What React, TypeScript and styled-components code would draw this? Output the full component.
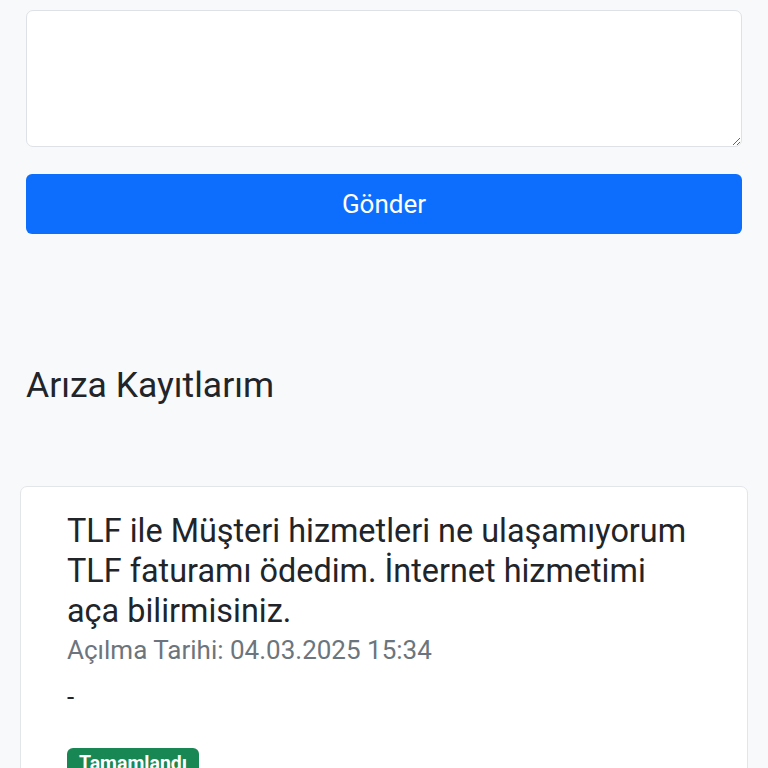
import styled, { createGlobalStyle } from "styled-components";

const GlobalStyle = createGlobalStyle`
  html, body {
    margin: 0;
    padding: 0;
    background: #f8f9fa;
    font-family: Roboto, "Noto Sans", Arial, sans-serif;
    color: #212529;
  }
  * {
    box-sizing: border-box;
  }
`;

const Page = styled.div`
  width: 768px;
  height: 768px;
  overflow: hidden;
`;

const FormSection = styled.div`
  padding: 0 26px;
  margin-top: -30px;
`;

const Label = styled.label`
  display: block;
  font-size: 24px;
  line-height: 32px;
  margin-bottom: 8px;
`;

const TextArea = styled.textarea`
  display: block;
  width: 100%;
  height: 137px;
  border: 1.5px solid #dee2e6;
  border-radius: 7px;
  background: #fff;
  font-family: inherit;
  font-size: 24px;
  padding: 10px 16px;
  resize: vertical;
  outline: none;
`;

const SubmitButton = styled.button`
  display: block;
  width: 100%;
  height: 60px;
  margin-top: 27px;
  border: none;
  border-radius: 6px;
  background: #0d6efd;
  color: #fff;
  font-family: inherit;
  font-size: 26px;
  cursor: pointer;
`;

const SectionTitle = styled.h2`
  margin: 129px 0 0;
  padding: 0 26px;
  font-size: 35.5px;
  font-weight: 400;
  line-height: 44px;
`;

const ListSection = styled.div`
  padding: 0 20px;
  margin-top: 79px;
`;

const Card = styled.div`
  background: #fff;
  border: 1.5px solid #e3e6e9;
  border-radius: 7px;
  padding: 24px 50px 30px 46px;
`;

const CardTitle = styled.div`
  font-size: 32.4px;
  line-height: 40px;
  color: #212529;
`;

const CardDate = styled.div`
  margin-top: 1px;
  font-size: 26px;
  line-height: 36px;
  color: #6c757d;
`;

const CardText = styled.div`
  margin-top: 11px;
  font-size: 26px;
  line-height: 36px;
  color: #212529;
`;

const Badge = styled.span<{ $tone: "success" | "warning" }>`
  display: inline-block;
  margin-top: 33px;
  padding: 4px 12px;
  border-radius: 6px;
  font-size: 19.5px;
  font-weight: 700;
  line-height: 24px;
  color: #fff;
  background: ${({ $tone }) => ($tone === "success" ? "#198754" : "#ffc107")};
`;

const tickets = [
  {
    id: 1,
    title:
      "TLF ile Müşteri hizmetleri ne ulaşamıyorum TLF faturamı ödedim. İnternet hizmetimi aça bilirmisiniz.",
    date: "04.03.2025 15:34",
    reply: "-",
    status: "Tamamlandı",
  },
];

const App = () => {
  return (
    <Page>
      <GlobalStyle />
      <FormSection>
        <Label htmlFor="mesaj">Mesajınız</Label>
        <TextArea id="mesaj" />
        <SubmitButton type="button">Gönder</SubmitButton>
      </FormSection>
      <SectionTitle>Arıza Kayıtlarım</SectionTitle>
      <ListSection>
        {tickets.map((t) => (
          <Card key={t.id}>
            <CardTitle>{t.title}</CardTitle>
            <CardDate>Açılma Tarihi: {t.date}</CardDate>
            <CardText>{t.reply}</CardText>
            <Badge $tone="success">{t.status}</Badge>
          </Card>
        ))}
      </ListSection>
    </Page>
  );
};

export default App;
